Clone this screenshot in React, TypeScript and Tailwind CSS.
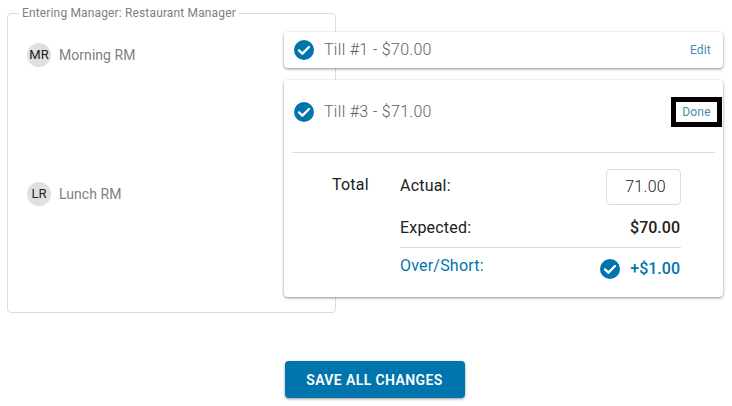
const font = { fontFamily: "Roboto, sans-serif" };

function CheckIcon() {
  return (
    <svg width="20" height="20" viewBox="0 0 20 20" className="shrink-0">
      <circle cx="10" cy="10" r="10" fill="#0075ad" />
      <path d="M5 10.4l3.4 3.3L15 7" fill="none" stroke="#fff" strokeWidth="2.4" strokeLinecap="round" strokeLinejoin="round" />
    </svg>
  );
}

function Manager({ initials, name, className }: { initials: string; name: string; className: string }) {
  return (
    <div className={`flex items-center gap-2 ${className}`}>
      <div className="flex h-6 w-6 items-center justify-center rounded-full bg-[#e0e0e0] text-[13px] text-[#212121]">
        {initials}
      </div>
      <span className="text-sm tracking-[0.05px] text-[#808080]">{name}</span>
    </div>
  );
}

export default function App() {
  return (
    <div className="h-[406px] w-[732px] overflow-hidden bg-white" style={font}>
      <div className="grid">
        <fieldset className="col-start-1 row-start-1 ml-[7px] mt-[6px] h-[307px] w-[329px] rounded border border-[#dcdcdc] pl-[19px]">
          <legend className="-ml-[8px] px-[3px] text-xs leading-[14px] tracking-[0.15px] text-[#808080]">
            Entering Manager: Restaurant Manager
          </legend>
          <Manager initials="MR" name="Morning RM" className="mt-[23px]" />
          <Manager initials="LR" name="Lunch RM" className="mt-[115px]" />
        </fieldset>

        <div className="col-start-1 row-start-1 ml-[284px] mt-[32px] flex w-[439px] flex-col gap-3 self-start">
          <div className="flex h-[36px] items-center rounded bg-white pl-[10px] pr-[12px] shadow-[0_1px_3px_rgba(0,0,0,0.45)]">
            <CheckIcon />
            <span className="ml-[10px] text-base font-light tracking-[0.3px] text-[#616161]">Till #1 - $70.00</span>
            <span className="ml-auto text-xs tracking-[0.2px] text-[#4a8ab0]">Edit</span>
          </div>

          <div className="h-[217px] rounded bg-white shadow-[0_1px_3px_rgba(0,0,0,0.45)]">
            <div className="mb-2 flex h-[64px] items-center pl-[10px] pr-[1px]">
              <CheckIcon />
              <span className="ml-[10px] text-base font-light tracking-[0.3px] text-[#616161]">Till #3 - $71.00</span>
              <span className="ml-auto flex h-[30px] w-[51px] items-center justify-center border-[5px] border-black text-xs tracking-[0.2px] text-[#4a8ab0]">
                Done
              </span>
            </div>
            <div className="mx-2 border-t border-[#dcdcdc]" />
            <div className="ml-[48px] mr-[42px] flex pt-[16px]">
              <div className="w-[68px] pt-[6px] text-base font-[450] leading-[20px] tracking-[0.2px] text-[#212121]">Total</div>
              <div className="flex-1">
                <div className="flex h-[36px] items-center justify-between">
                  <span className="-mt-[2px] text-base font-[450] tracking-[0.2px] text-[#212121]">Actual:</span>
                  <div className="flex h-[36px] w-[75px] items-center justify-end rounded border border-[#dcdcdc] pr-[14px] text-base font-light tracking-[0.3px] text-[#212121]">
                    71.00
                  </div>
                </div>
                <div className="flex h-[43px] items-center justify-between border-b border-[#dcdcdc] pr-px pt-[3px] text-base font-[450] tracking-[0.2px] text-[#212121]">
                  <span>Expected:</span>
                  <span className="font-medium tracking-normal">$70.00</span>
                </div>
                <div className="flex h-[42px] items-center justify-between pr-px text-[#0075ad]">
                  <span className="-mt-[6px] text-base font-[450] tracking-[0.2px]">Over/Short:</span>
                  <span className="flex items-center gap-[10px] text-base font-medium">
                    <CheckIcon />
                    +$1.00
                  </span>
                </div>
              </div>
            </div>
          </div>
        </div>
      </div>

      <div className="mt-[48px] flex justify-center pl-[18px]">
        <button className="h-[37px] w-[180px] rounded bg-[#0075ad] pr-px text-sm font-semibold uppercase tracking-[0.4px] text-white shadow-[0_1px_3px_rgba(0,0,0,0.4)]">
          Save all changes
        </button>
      </div>
    </div>
  );
}
